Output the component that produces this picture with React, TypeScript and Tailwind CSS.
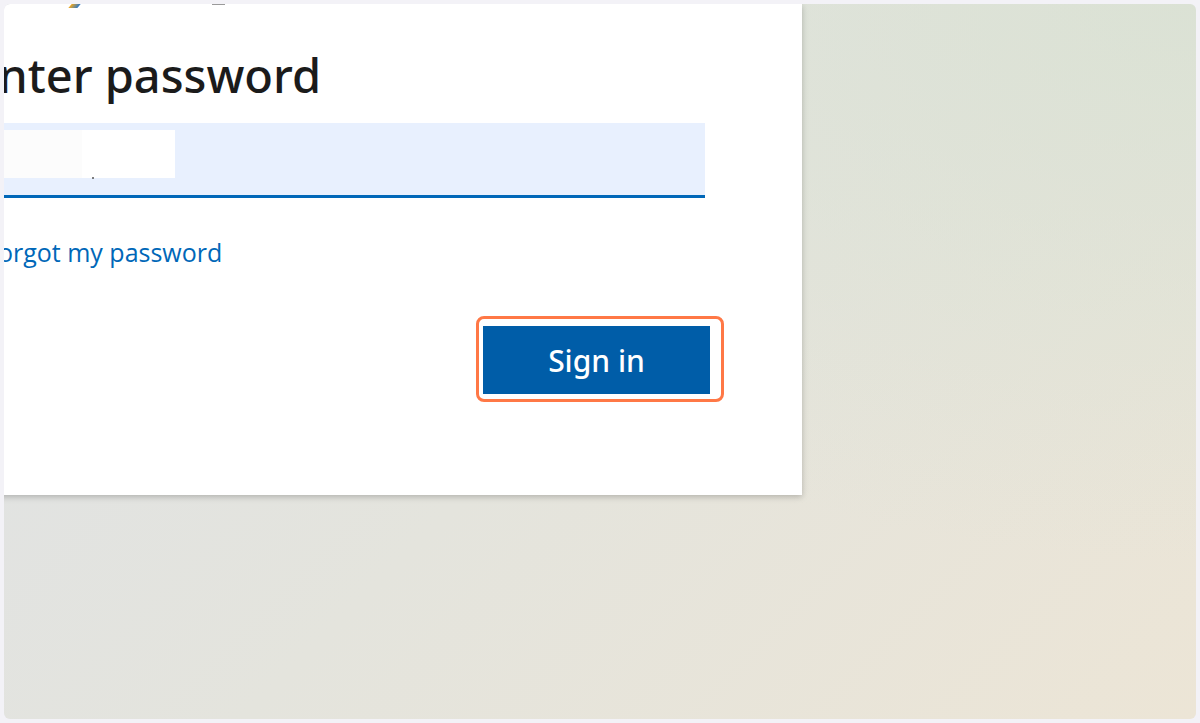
export default function App() {
  return (
    <div className="h-[723px] w-[1200px] bg-[#f3f2f7] p-1 font-['Open_Sans',sans-serif]">
      <div className="h-full overflow-hidden rounded-md bg-[radial-gradient(ellipse_at_top_right,rgba(216,225,211,0.8),transparent_55%),linear-gradient(135deg,#dfe2e6_0%,#e4e4dd_50%,#ece5d6_100%)]">
        <div className="-ml-[60px] flex h-[491px] w-[858px] flex-col bg-white pl-[44px] pr-[97px] shadow-[0_2px_6px_rgba(0,0,0,0.22)]">
          {/* clipped bits of the row above */}
          <div className="flex h-[5px] items-start">
            <span className="ml-[82px] h-[4px] w-[9px] -skew-x-[40deg] bg-[linear-gradient(90deg,#f2a81d,#2b78c9)]" />
            <span className="ml-[133px] h-[1px] w-[13px] bg-[#9a9a9a]" />
          </div>

          <h1 className="-ml-[16px] mt-[39px] font-['Noto_Sans',sans-serif] text-[47px] font-medium leading-[55px] text-[#1b1b1b]">
            Enter password
          </h1>

          <div className="mt-[20px] flex h-[75px] items-start border-b-[3px] border-[#0067b8] bg-[#e8f0fe] pt-[7px]">
            <div className="h-[48px] w-[94px] bg-[#fcfcfc]" />
            <div className="relative h-[48px] w-[93px] bg-white">
              <span className="absolute left-[10px] top-[47px] h-[2px] w-[2px] rounded-full bg-[#555]" />
            </div>
          </div>

          <a className="-ml-[3px] mt-[37px] text-[25px] leading-[34px] text-[#0067b8]">Forgot my password</a>

          <div className="mt-[47px] flex justify-end">
            <div className="-mr-[19px] rounded-lg border-[3px] border-[#ff7846] pb-[5px] pl-[4px] pr-[11px] pt-[7px]">
              <button className="h-[68px] w-[227px] bg-[#005da8] font-['Noto_Sans',sans-serif] text-[30px] font-medium text-white">
                Sign in
              </button>
            </div>
          </div>
        </div>
      </div>
    </div>
  );
}
